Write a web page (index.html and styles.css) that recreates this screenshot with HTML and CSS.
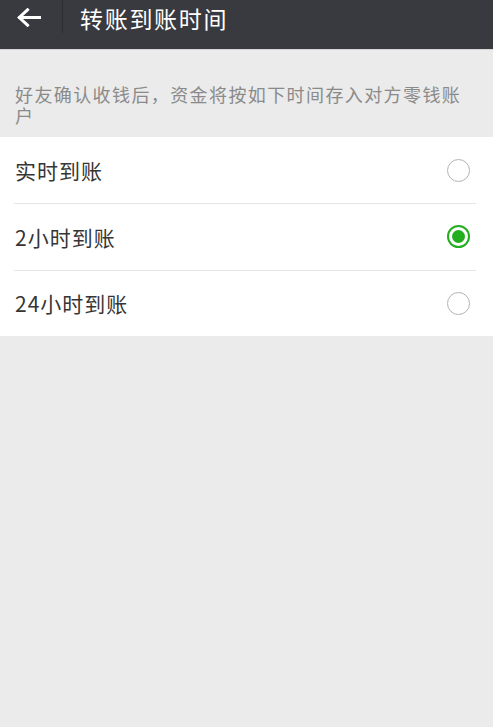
FILE: index.html
```html
<!DOCTYPE html>
<html lang="zh-CN">
<head>
<meta charset="utf-8">
<title>转账到账时间</title>
<link rel="stylesheet" href="styles.css">
</head>
<body>
<header class="header">
  <div class="back">
    <svg class="back-icon" width="24" height="19" viewBox="0 0 24 19">
      <path d="M10.5 1.8 L2.3 9.5 L10.5 17.2 M2.6 9.5 H22.5" fill="none" stroke="#ffffff" stroke-width="3" stroke-linecap="square" stroke-linejoin="miter"/>
    </svg>
  </div>
  <div class="sep"></div>
  <h1 class="title">转账到账时间</h1>
</header>
<p class="tip">好友确认收钱后，资金将按如下时间存入对方零钱账户</p>
<ul class="list">
  <li class="row"><span class="label">实时到账</span><span class="radio"></span></li>
  <li class="row"><span class="label">2小时到账</span><span class="radio checked"></span></li>
  <li class="row"><span class="label">24小时到账</span><span class="radio"></span></li>
</ul>
</body>
</html>
```
FILE: styles.css
```css
* { box-sizing: border-box; }
html, body {
  margin: 0;
  padding: 0;
  background: #ebebeb;
  font-family: "Noto Sans CJK SC", "Noto Sans", sans-serif;
}
.header {
  height: 50px;
  background: #393a3f;
  border-bottom: 1px solid #d6d6d6;
  display: flex;
  align-items: flex-start;
}
.back {
  width: 62px;
  padding: 8px 0 0 17px;
  display: flex;
}
.back-icon { display: block; }
.sep {
  width: 1px;
  height: 33px;
  background: #2c2d31;
}
.title {
  margin: 0 0 0 17px;
  font-size: 23px;
  font-weight: normal;
  line-height: 36px;
  letter-spacing: 1.7px;
  color: #ffffff;
}
.tip {
  margin: 0;
  padding: 34px 14px 11px 15px;
  font-size: 18px;
  line-height: 21px;
  letter-spacing: 1.4px;
  color: #8a8a8a;
}
.list {
  list-style: none;
  margin: 0;
  padding: 0 17px 0 14px;
  background: #ffffff;
}
.row {
  height: 66px;
  padding: 0 6px 0 1px;
  display: flex;
  align-items: center;
  justify-content: space-between;
}
.row + .row {
  border-top: 1px solid #e6e6e6;
  height: 66.5px;
}
.label {
  font-size: 21px;
  letter-spacing: 1px;
  color: #353535;
}
.radio {
  width: 23px;
  height: 23px;
  border-radius: 50%;
  border: 1.5px solid #b3b3b3;
  display: flex;
  align-items: center;
  justify-content: center;
}
.radio.checked {
  border: 2px solid #22ae1e;
}
.radio.checked::after {
  content: "";
  width: 13px;
  height: 13px;
  border-radius: 50%;
  background: #22ae1e;
}
```
